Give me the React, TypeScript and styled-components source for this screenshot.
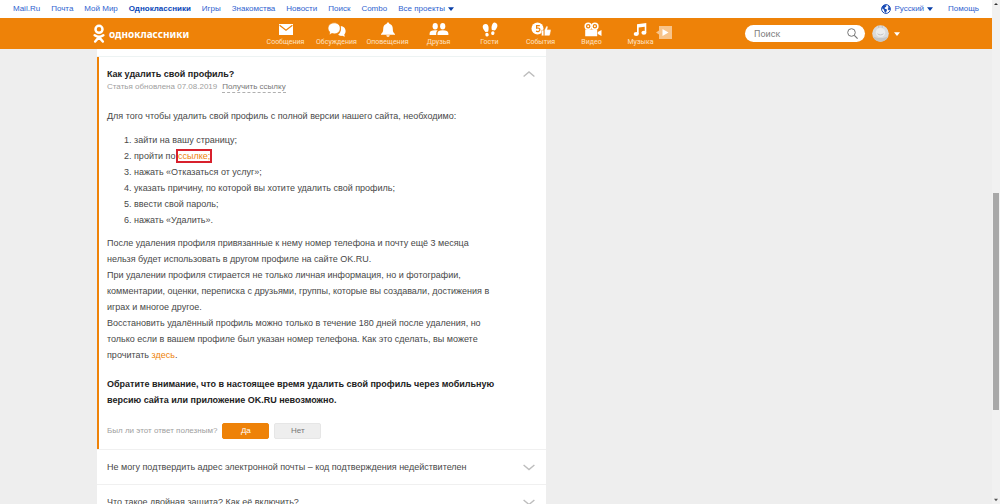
import React from "react";
import styled, { createGlobalStyle, css } from "styled-components";

const GlobalStyle = createGlobalStyle`
  * { box-sizing: border-box; }
  body {
    margin: 0;
    background: #eeeeee;
    color: #484848;
    font: 9px/16px "Liberation Sans", Arial, sans-serif;
  }
  a { color: inherit; text-decoration: none; }
  button, input { font: inherit; }
  p, h1, h2, ol { margin: 0; }
`;

const orange = "#ee8208";

const Shell = styled.div`
  display: flex;
  height: 100vh;
  overflow: hidden;
`;

const Page = styled.div`
  flex: 1;
  min-width: 0;
`;

const PortalBar = styled.nav`
  display: flex;
  align-items: center;
  gap: 11px;
  height: 18px;
  padding: 0 13px;
  background: #fff;
  color: #2f63cf;
  font-size: 8px;
`;

const PortalLink = styled.a<{ $active?: boolean }>`
  display: flex;
  align-items: center;
  gap: 3px;
  white-space: nowrap;
  ${(p) =>
    p.$active &&
    css`
      color: #0a47b8;
      font-weight: bold;
    `}
`;

const PortalRight = styled.div`
  display: flex;
  gap: 15px;
  margin-left: auto;
`;

const Toolbar = styled.header`
  display: flex;
  align-items: center;
  height: 31px;
  padding-left: 93px;
  background: ${orange};
  color: #fff;
`;

const Logo = styled.a`
  display: flex;
  align-items: center;
  gap: 4px;
  width: 167px;
  font: bold 10px/16px "Noto Sans", sans-serif;
`;

const ToolbarNav = styled.nav`
  display: flex;
`;

const ToolbarItem = styled.a`
  display: flex;
  flex-direction: column;
  align-items: center;
  width: 51px;
  color: #ffe3c2;
  font: 7px/8px Roboto, sans-serif;

  &:last-child { width: 47px; }
  svg { color: #fff; }
`;

const PlayButton = styled.button`
  display: flex;
  align-self: flex-start;
  margin: 2px 0 0 -8px;
  padding: 0;
  border: 0;
  background: none;
`;

const Search = styled.form`
  display: flex;
  align-items: center;
  width: 120px;
  height: 17px;
  margin-left: 73px;
  padding: 0 7px 0 9px;
  border-radius: 9px;
  background: #fff;
`;

const SearchInput = styled.input`
  flex: 1;
  min-width: 0;
  padding: 0;
  border: 0;
  outline: 0;
  background: none;
  font: 9px/16px Roboto, sans-serif;

  &::placeholder { color: #808080; opacity: 1; }
`;

const IconButton = styled.button`
  display: flex;
  align-items: center;
  gap: 5px;
  padding: 0;
  border: 0;
  background: none;
  color: inherit;
`;

const Account = styled(IconButton)`
  margin-left: 7px;
`;

const Content = styled.main`
  width: 449px;
  margin-left: 97px;
  padding-top: 8px;
  background: #fff;
`;

const Article = styled.article`
  padding: 9px 40px 10px 8px;
  border-left: 2px solid ${orange};
  box-shadow: 0 -1px #edf3f3;
`;

const ArticleHead = styled.div`
  display: flex;
  justify-content: space-between;
  margin-right: -29px;
  color: #222;
`;

const Title = styled.h1`
  font-size: 9px;
  line-height: 16px;
`;

const Meta = styled.div`
  display: flex;
  gap: 5px;
  margin-bottom: 15px;
  color: #a0a0a0;
  font-size: 8px;
  line-height: 10px;
`;

const MetaLink = styled.a`
  border-bottom: 1px dashed #b0b0b0;
  color: #777;
`;

const Steps = styled.ol`
  margin: 8px 0 7px;
  padding-left: 27px;
`;

const TextLink = styled.a<{ $marked?: boolean }>`
  color: ${orange};
  ${(p) =>
    p.$marked &&
    css`
      outline: 2px solid #d8202c;
    `}
`;

const Notice = styled.p`
  margin-top: 13px;
  color: #222;
  font-weight: bold;
`;

const Feedback = styled.div`
  display: flex;
  align-items: center;
  gap: 5px;
  margin-top: 15px;
  color: #a0a0a0;
  font-size: 8px;
`;

const Answer = styled.button<{ $primary?: boolean }>`
  width: 47px;
  height: 16px;
  padding: 0;
  border: 1px solid ${(p) => (p.$primary ? orange : "#e6e6e6")};
  border-radius: 2px;
  background: ${(p) => (p.$primary ? orange : "#eeeeee")};
  color: ${(p) => (p.$primary ? "#fff" : "#777")};
  font-size: 8px;
  line-height: 14px;
`;

const Question = styled.button`
  display: flex;
  align-items: center;
  justify-content: space-between;
  width: 100%;
  height: 35px;
  padding: 0 11px 0 10px;
  border: 0;
  border-top: 1px solid #f0f0f0;
  background: #fff;
  color: #484848;
  text-align: left;
`;

const ScrollTrack = styled.div`
  display: flex;
  flex-direction: column;
  align-items: center;
  width: 8px;
  padding: 2px 0;
  background: #f1f1f1;
`;

const ScrollSpace = styled.div<{ $grow: number }>`
  flex: ${(p) => p.$grow} 0 0;
`;

const ScrollThumb = styled(ScrollSpace)`
  width: 6px;
  background: #a8a8a8;
`;

const Caret = ({ color = "currentColor", up = false, size = 6 }) => (
  <svg width={size} height={size} viewBox="0 0 6 6" aria-hidden="true">
    <path d={up ? "M0 4.6h6L3 1.4z" : "M0 1.3h6L3 5z"} fill={color} />
  </svg>
);

const Chevron = ({ up = false }) => (
  <svg width="12" height="16" viewBox="0 0 12 16" fill="none" stroke="#bdbdbd" strokeWidth="1.4" aria-hidden="true">
    <path d={up ? "M.6 10.5 6 6l5.4 4.5" : "M.6 6 6 10.5 11.4 6"} />
  </svg>
);

const icons: Record<string, React.ReactNode> = {
  mail: (
    <>
      <path d="M3 3h14v11H3z" fill="currentColor" />
      <path d="m3.6 4.2 6.4 5 6.4-5" fill="none" stroke={orange} strokeWidth="1.2" />
    </>
  ),
  chat: (
    <>
      <path d="M13.6 5.1c3 .2 5 2.400 5 5 0 1.300-.5 2.600-1.300 3.500l.5 2.100-2.500-.9c-1.500.3-3.100 0-4.200-1 2.300-1.400 3.600-5.400 2.500-8.700z" fill="currentColor" />
      <path d="M7.200 1.800c3.600 0 6.100 2.400 6.100 5.500 0 3.200-2.500 5.600-6.100 5.600-.8 0-1.500-.1-2.200-.3L2.100 13.900l.6-2.900C1.600 10 1 8.700 1 7.300 1 4.200 3.600 1.800 7.200 1.800z" fill="currentColor" stroke={orange} strokeWidth=".8" />
    </>
  ),
  bell: (
    <path d="M10 1.500c.8 0 1.300.5 1.300 1.200 2.400.6 3.500 2.500 3.500 5 0 2.900.6 4.100 2.200 5.200v.8H3v-.8c1.600-1.100 2.200-2.300 2.200-5.200 0-2.500 1.100-4.400 3.500-5 0-.7.5-1.200 1.300-1.200zM8.300 14.300h3.400c-.2 1-.8 1.500-1.700 1.500s-1.500-.5-1.700-1.500z" fill="currentColor" />
  ),
  friends: (
    <g fill="currentColor">
      <ellipse cx="6.200" cy="5.200" rx="2.600" ry="3.200" />
      <ellipse cx="13.700" cy="5.200" rx="2.600" ry="3.200" />
      <path d="M.6 14v-1.600c0-2 2-3.100 5.500-3.100 1 0 1.900.1 2.600.3-1 .7-1.500 1.700-1.500 3V14zM8.500 14v-1.600c0-2 1.800-3.100 5.200-3.100s5.700 1.100 5.700 3.100V14z" />
    </g>
  ),
  guests: (
    <g fill="currentColor">
      <path d="M5.500 3c1.900-.2 3 1.500 3.100 3.800.1 1.300-.1 2.500-.5 3.900l-2.700.3C4.300 9.300 2.700 7.800 2.700 5.800 2.700 4.300 4 3.100 5.500 3zM14.700 1.500c1.800.2 2.900 1.700 2.700 3.400-.2 1.800-1.500 3.300-2.600 4.700l-2.900-.5c-.4-1.600-.5-2.900-.1-4.300.5-2 1.500-3.500 2.900-3.300z" />
      <ellipse cx="7" cy="13.600" rx="1.700" ry="1.900" transform="rotate(-12 7 13.600)" />
      <ellipse cx="12.800" cy="12.200" rx="1.700" ry="1.900" transform="rotate(14 12.800 12.200)" />
    </g>
  ),
  events: (
    <>
      <circle cx="6.500" cy="7.500" r="6" fill="currentColor" />
      <path d="M8.800 4.700H5.600v2.500c2-.5 3.300.1 3.300 1.600 0 1.600-2 2.200-3.900 1.300" fill="none" stroke={orange} strokeWidth="1.200" />
      <path d="M10.500 9.300h2.300v5.500h-2.300zM13.300 9.300l2.200-4.200c1.100 0 1.600.8 1.200 2l-.4 1.500h2.600c.8 0 1.200.6 1 1.400l-.9 3.700c-.2.7-.6 1.100-1.400 1.100h-4.300z" fill="currentColor" stroke={orange} strokeWidth=".4" />
    </>
  ),
  video: (
    <>
      <path d="M3.200 8.500h12v6.800h-12zM15.800 11l3.700-2.100v6.200L15.800 13z" fill="currentColor" />
      <circle cx="6.200" cy="5.300" r="3" fill={orange} stroke="currentColor" strokeWidth="1.500" />
      <circle cx="12.900" cy="5.300" r="3" fill={orange} stroke="currentColor" strokeWidth="1.500" />
      <circle cx="6.200" cy="5.300" r="1" fill="currentColor" />
      <circle cx="12.900" cy="5.300" r="1" fill="currentColor" />
    </>
  ),
  music: (
    <g fill="currentColor">
      <path d="M6 3.200 15.300 2v9.500h-1.600V5.800l-6 .8v6.600H6z" />
      <ellipse cx="5.200" cy="13" rx="2.500" ry="2" />
      <ellipse cx="12.900" cy="11.800" rx="2.500" ry="2" />
    </g>
  ),
};

const OkMark = () => (
  <svg width="12" height="20" viewBox="0 0 12 20" fill="none" stroke="#fff" strokeLinecap="round" aria-hidden="true">
    <circle cx="6" cy="5.300" r="3.500" strokeWidth="2.500" />
    <path d="M1.700 11.300c2.700 1.900 5.900 1.900 8.600 0M6 13.200 2.200 17.500M6 13.200l3.800 4.300" strokeWidth="2.500" />
  </svg>
);

const Globe = () => (
  <svg width="10" height="10" viewBox="0 0 10 10" aria-hidden="true">
    <circle cx="5" cy="5" r="4.400" fill="#fff" stroke="#1a4cb5" />
    <path d="M1 2.800 3.200.9l2.300.4-.4 1.400-1.500 1 .3 1.100 1.800.5.2 1.500L4.500 9 3.200 7.300 3 5.700 1.200 4.500zM6.800 1.800l2 1.500.4 2.200-1.500.8-1.100-1.400.9-1z" fill="#1a4cb5" />
  </svg>
);

const Avatar = () => (
  <svg width="17" height="17" viewBox="0 0 17 17" aria-hidden="true">
    <circle cx="8.500" cy="8.500" r="8.300" fill="#dadada" />
    <path d="M.8 11.300c3.500 2.400 11.900 2.400 15.400 0C15 14.700 12.200 16.800 8.500 16.800S2 14.700.8 11.300z" fill="#c6c6c6" />
    <ellipse cx="8.500" cy="7.500" rx="4.800" ry="4.500" fill="#ececec" />
    <path d="M6.700 1v1.800M10.300 1v1.800M5.500 8.700c1.700 1.600 4.300 1.600 6 0" fill="none" stroke="#b9b9b9" strokeWidth=".8" />
  </svg>
);

const portals = ["Mail.Ru", "Почта", "Мой Мир", "Одноклассники", "Игры", "Знакомства", "Новости", "Поиск", "Combo"];

const sections = [
  ["mail", "Сообщения"],
  ["chat", "Обсуждения"],
  ["bell", "Оповещения"],
  ["friends", "Друзья"],
  ["guests", "Гости"],
  ["events", "События"],
  ["video", "Видео"],
  ["music", "Музыка"],
];

const questions = [
  "Не могу подтвердить адрес электронной почты – код подтверждения недействителен",
  "Что такое двойная защита? Как её включить?",
];

export default function App() {
  return (
    <Shell>
      <GlobalStyle />
      <Page>
        <PortalBar>
          {portals.map((name) => (
            <PortalLink key={name} href="#" $active={name === "Одноклассники"}>{name}</PortalLink>
          ))}
          <PortalLink href="#">Все проекты <Caret color="#0a3fa8" /></PortalLink>
          <PortalRight>
            <PortalLink href="#"><Globe />Русский <Caret color="#0a3fa8" /></PortalLink>
            <PortalLink href="#">Помощь</PortalLink>
          </PortalRight>
        </PortalBar>
        <Toolbar>
          <Logo href="#"><OkMark />одноклассники</Logo>
          <ToolbarNav>
            {sections.map(([icon, label]) => (
              <ToolbarItem key={label} href="#">
                <svg width="20" height="17" viewBox="0 0 20 17" aria-hidden="true">{icons[icon]}</svg>
                {label}
              </ToolbarItem>
            ))}
          </ToolbarNav>
          <PlayButton aria-label="Слушать">
            <svg width="16" height="20" viewBox="0 0 16 20" aria-hidden="true">
              <path d="M3 6h13v13H3v-4.500L0 12.500l3-2z" fill="#f8c48a" />
              <path d="m6.500 9 6 3.500-6 3.500z" fill="#fff" />
            </svg>
          </PlayButton>
          <Search role="search">
            <SearchInput type="search" aria-label="Поиск" placeholder="Поиск" />
            <IconButton type="button" aria-label="Найти">
              <svg width="11" height="11" viewBox="0 0 11 11" fill="none" stroke="#777" aria-hidden="true">
                <circle cx="4.500" cy="4.500" r="3.800" />
                <path d="m7.300 7.300 3.300 3.300" strokeWidth="1.200" />
              </svg>
            </IconButton>
          </Search>
          <Account aria-label="Профиль"><Avatar /><Caret /></Account>
        </Toolbar>
        <Content>
          <Article>
            <ArticleHead>
              <Title>Как удалить свой профиль?</Title>
              <IconButton aria-label="Свернуть"><Chevron up /></IconButton>
            </ArticleHead>
            <Meta>
              <span>Статья обновлена 07.08.2019</span>
              <MetaLink href="#">Получить ссылку</MetaLink>
            </Meta>
            <p>Для того чтобы удалить свой профиль с полной версии нашего сайта, необходимо:</p>
            <Steps>
              <li>зайти на вашу страницу;</li>
              <li>пройти по <TextLink href="#" $marked>ссылке;</TextLink></li>
              <li>нажать «Отказаться от услуг»;</li>
              <li>указать причину, по которой вы хотите удалить свой профиль;</li>
              <li>ввести свой пароль;</li>
              <li>нажать «Удалить».</li>
            </Steps>
            <p>
              После удаления профиля привязанные к нему номер телефона и почту ещё 3 месяца<br />
              нельзя будет использовать в другом профиле на сайте OK.RU.
            </p>
            <p>
              При удалении профиля стирается не только личная информация, но и фотографии,<br />
              комментарии, оценки, переписка с друзьями, группы, которые вы создавали, достижения в<br />
              играх и многое другое.
            </p>
            <p>
              Восстановить удалённый профиль можно только в течение 180 дней после удаления, но<br />
              только если в вашем профиле был указан номер телефона. Как это сделать, вы можете<br />
              прочитать <TextLink href="#">здесь</TextLink>.
            </p>
            <Notice>
              Обратите внимание, что в настоящее время удалить свой профиль через мобильную<br />
              версию сайта или приложение OK.RU невозможно.
            </Notice>
            <Feedback>
              <span>Был ли этот ответ полезным?</span>
              <Answer $primary>Да</Answer>
              <Answer>Нет</Answer>
            </Feedback>
          </Article>
          {questions.map((text) => (
            <Question key={text}>{text}<Chevron /></Question>
          ))}
        </Content>
      </Page>
      <ScrollTrack aria-hidden="true">
        <Caret up size={4} color="#333" />
        <ScrollSpace $grow={187} />
        <ScrollThumb $grow={217} />
        <ScrollSpace $grow={88} />
        <Caret size={4} color="#555" />
      </ScrollTrack>
    </Shell>
  );
}
